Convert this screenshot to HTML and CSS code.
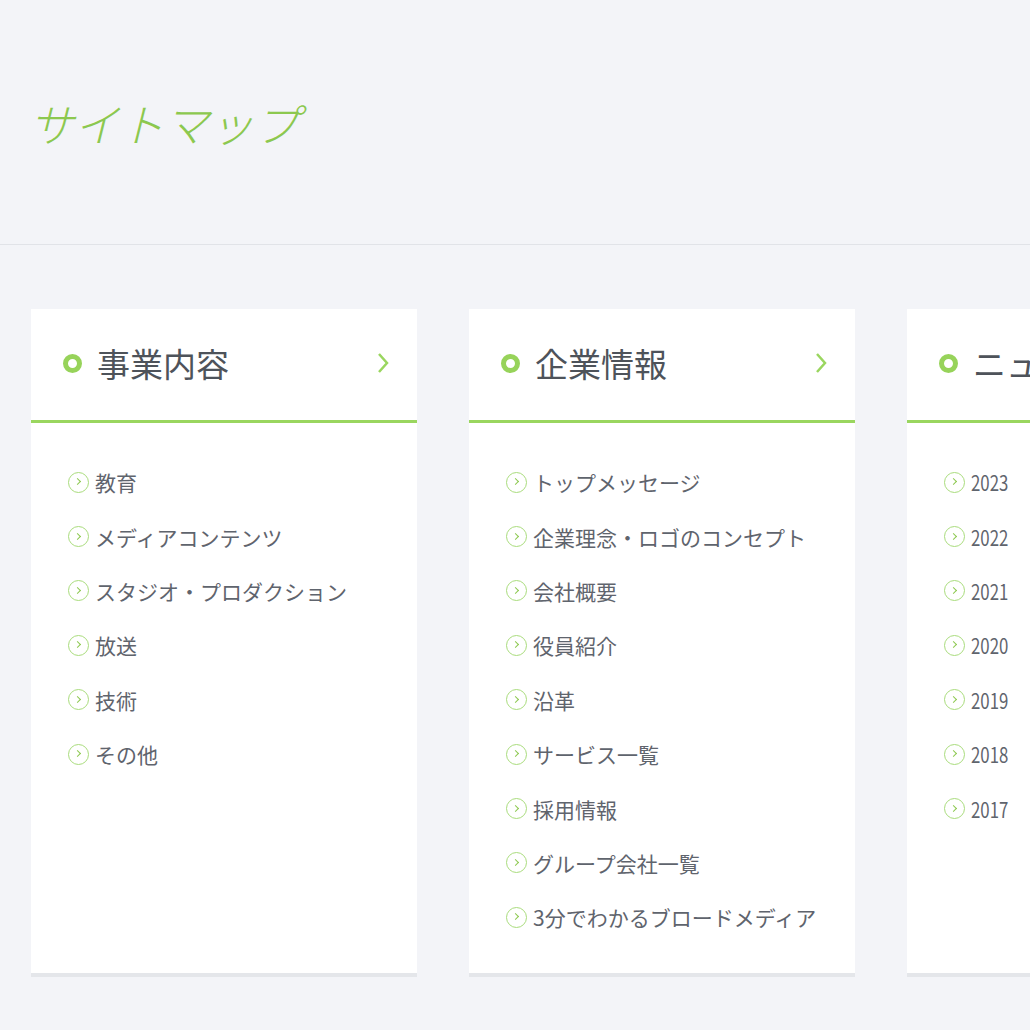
FILE: index.html
```html
<!doctype html>
<html lang="ja">
  <head>
    <meta charset="utf-8" />
    <title>サイトマップ</title>
    <meta name="viewport" content="width=device-width, initial-scale=1" />
    <link rel="stylesheet" href="styles.css">
  </head>
  <body>
    <header class="pageHead">
      <h1 class="pageTitle">サイトマップ</h1>
    </header>
    <main class="cards">
      <section class="card">
        <a class="cardHead" href="#">
          <span class="ring"></span>
          <span class="cardTitle">事業内容</span>
          <svg class="chev" width="12" height="22" viewBox="0 0 12 22"><polyline points="2,2 10,11 2,20" /></svg>
        </a>
        <ul class="links">
          <li><span class="dot"></span>教育</li>
          <li><span class="dot"></span>メディアコンテンツ</li>
          <li><span class="dot"></span>スタジオ・プロダクション</li>
          <li><span class="dot"></span>放送</li>
          <li><span class="dot"></span>技術</li>
          <li><span class="dot"></span>その他</li>
        </ul>
      </section>
      <section class="card">
        <a class="cardHead" href="#">
          <span class="ring"></span>
          <span class="cardTitle">企業情報</span>
          <svg class="chev" width="12" height="22" viewBox="0 0 12 22"><polyline points="2,2 10,11 2,20" /></svg>
        </a>
        <ul class="links">
          <li><span class="dot"></span>トップメッセージ</li>
          <li><span class="dot"></span>企業理念・ロゴのコンセプト</li>
          <li><span class="dot"></span>会社概要</li>
          <li><span class="dot"></span>役員紹介</li>
          <li><span class="dot"></span>沿革</li>
          <li><span class="dot"></span>サービス一覧</li>
          <li><span class="dot"></span>採用情報</li>
          <li><span class="dot"></span>グループ会社一覧</li>
          <li><span class="dot"></span>3分でわかるブロードメディア</li>
        </ul>
      </section>
      <section class="card">
        <a class="cardHead" href="#">
          <span class="ring"></span>
          <span class="cardTitle">ニュース</span>
          <svg class="chev" width="12" height="22" viewBox="0 0 12 22"><polyline points="2,2 10,11 2,20" /></svg>
        </a>
        <ul class="links">
          <li><span class="dot"></span><span class="num">2023</span></li>
          <li><span class="dot"></span><span class="num">2022</span></li>
          <li><span class="dot"></span><span class="num">2021</span></li>
          <li><span class="dot"></span><span class="num">2020</span></li>
          <li><span class="dot"></span><span class="num">2019</span></li>
          <li><span class="dot"></span><span class="num">2018</span></li>
          <li><span class="dot"></span><span class="num">2017</span></li>
        </ul>
      </section>
    </main>
  </body>
</html>
```

FILE: styles.css
```css
html {
  overflow: hidden;
}
body {
  margin: 0;
  background-color: #f3f4f8;
  font-family: "Noto Sans CJK JP", sans-serif;
  color: #51565d;
}
.pageHead {
  height: 244px;
  border-bottom: 1px solid #e1e3e8;
  display: flex;
  align-items: center;
  padding: 0 0 0 29px;
}
.pageTitle {
  margin: 0;
  font-size: 45px;
  font-weight: 300;
  font-style: italic;
  color: #8cc84f;
}
.cards {
  display: grid;
  grid-template-columns: repeat(3, 386px);
  gap: 52px;
  padding: 64px 0 0 31px;
}
.card {
  background: #fff;
  border-bottom: 4px solid #e4e6ea;
  margin-bottom: 0;
}
.cardHead {
  display: flex;
  align-items: center;
  height: 111px;
  border-bottom: 3px solid #9ad65f;
  padding: 0 28px 0 32px;
  text-decoration: none;
  color: #4e535a;
}
.ring {
  width: 9px;
  height: 9px;
  border: 5px solid #97d35a;
  border-radius: 50%;
  margin-right: 15px;
  margin-top: -2px;
  flex: none;
}
.cardTitle {
  font-size: 33px;
  font-weight: 400;
  flex: 1;
  white-space: nowrap;
  margin-top: -3px;
}
.chev {
  flex: none;
  margin-top: -4px;
}
.chev polyline {
  fill: none;
  stroke: #9ad65f;
  stroke-width: 2.5;
}
.links {
  list-style: none;
  margin: 0;
  padding: 32px 0 28px 37px;
}
.links li {
  display: flex;
  align-items: center;
  height: 54.4px;
  font-size: 21px;
  font-weight: 400;
  color: #5f646d;
  white-space: nowrap;
}
.num {
  display: inline-block;
  transform: scaleX(0.8);
  transform-origin: left center;
}
.dot {
  position: relative;
  width: 19px;
  height: 19px;
  border: 1.5px solid #a9dc7c;
  border-radius: 50%;
  margin-right: 6px;
  flex: none;
}
.dot::after {
  content: "";
  position: absolute;
  left: 5.5px;
  top: 6.5px;
  width: 4px;
  height: 4px;
  border-top: 1.5px solid #8cc84f;
  border-right: 1.5px solid #8cc84f;
  transform: rotate(45deg);
}
```
